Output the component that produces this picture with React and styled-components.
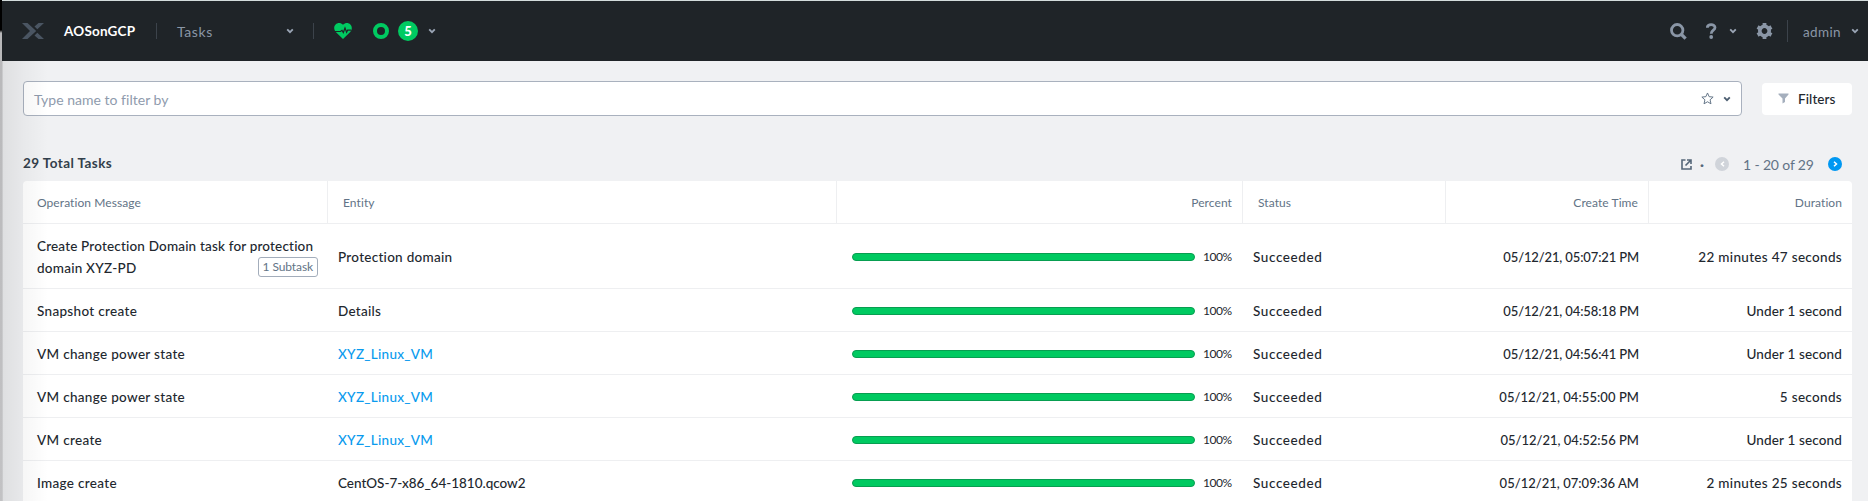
import React from 'react';
import styled, { createGlobalStyle } from 'styled-components';

const Global = createGlobalStyle`
  * { box-sizing: border-box; }
  body { margin: 0; overflow: hidden; background: #f0f1f3; font-family: Lato, sans-serif; }
`;
const Window = styled.div`
  position: relative; height: 501px; display: flex; overflow: hidden;
`;
const Edge = styled.div`
  flex: 0 0 2px; background: linear-gradient(#000 0 30px, #b8b8ba 33px, #c2c2c4 100%);
`;
const Shade = styled.div`
  position: absolute; left: 2px; top: 61px; bottom: 0; width: 46px; pointer-events: none;
  background: linear-gradient(90deg, rgba(0,0,0,.16) 0 1px, rgba(0,0,0,.075) 1px, rgba(0,0,0,.035) 21px, rgba(0,0,0,0) 100%);
`;
const Main = styled.div`flex: 1; min-width: 0;`;
const Text = styled.span`
  white-space: nowrap; display: block;
  font-size: ${p => p.$size || 14}px;
  font-weight: ${p => p.$weight || 400};
  letter-spacing: ${p => p.$track || 0}px;
  color: ${p => p.$color || '#22272e'};
`;
const TopBar = styled.header`
  height: 61px; border-top: 1px solid #d3dcdc; background: #1f2428;
  display: flex; align-items: center; padding: 0 9px 0 20px;
`;
const Group = styled.div`
  display: flex; align-items: center; margin-left: ${p => p.$ml || 0}px;
  width: ${p => p.$w ? p.$w + 'px' : 'auto'}; padding-top: ${p => p.$pt || 0}px;
`;
const Divider = styled.i`width: 1px; height: ${p => p.$h}px; background: #3c434b; margin-left: ${p => p.$ml}px;`;
const Spacer = styled.div`flex: 1;`;
const Icon = styled.svg`display: block; flex: none; margin-left: ${p => p.$ml || 0}px;`;
const Badge = styled.span`
  width: 20px; height: 20px; border-radius: 50%; background: #00ca61; color: #fff; margin-left: 9px;
  display: grid; place-items: center; font-size: 13px; font-weight: 900; line-height: 20px;
`;
const Chevron = ({ color = '#9aa5b5', ml }) => (
  <Icon $ml={ml} width="8" height="6" viewBox="0 0 8 6"><path d="M1.2 1.3 4 4.2 6.8 1.3" fill="none" stroke={color} strokeWidth="1.8" /></Icon>
);
const Content = styled.main`padding: 20px 16px 0 21px;`;
const FilterRow = styled.div`display: flex; align-items: center; gap: 20px;`;
const Search = styled.div`
  flex: 1; height: 35px; border: 1px solid #a9b1be; border-radius: 4px; background: #fff;
  display: flex; align-items: center; padding: 0 10px 0 10px;
`;
const FilterButton = styled.button`
  width: 90px; height: 32px; border: 0; border-radius: 4px; background: #fff; font-family: inherit;
  display: flex; align-items: center; padding: 0 0 0 16px; margin: 0;
`;
const Summary = styled.div`
  height: 65px; display: flex; align-items: flex-end; padding: 0 10px 7px 0;
`;
const Total = styled.div`padding-bottom: 3px;`;
const Pager = styled.div`display: flex; align-items: center; height: 20px;`;
const PageButton = styled.span`
  width: 14px; height: 14px; border-radius: 50%; background: ${p => p.$on ? '#0098f2' : '#d0d4da'};
  display: grid; place-items: center; margin-left: ${p => p.$ml}px;
`;
const Table = styled.section`background: #fff; border-radius: 4px 4px 0 0;`;
const Row = styled.div`
  display: grid; grid-template-columns: 305px 509px 406px 203px 203px 1fr;
  height: ${p => p.$h}px; border-bottom: 1px solid #eeeff1;
`;
const HeadCell = styled.div`
  display: flex; align-items: center; justify-content: ${p => p.$right ? 'flex-end' : 'flex-start'};
  padding: 0 10px 0 ${p => p.$first ? 14 : 15}px; border-right: ${p => p.$last ? 0 : '1px solid #eeeff1'};
`;
const Cell = styled.div`
  display: flex; align-items: center; justify-content: ${p => p.$right ? 'flex-end' : 'flex-start'};
  padding: 2px 10px 0 ${p => p.$first ? 14 : 10}px;
`;
const Stack = styled.div`flex: 1; min-width: 0;`;
const Line = styled.div`display: flex; justify-content: space-between; height: 22px; align-items: center;`;
const Subtask = styled.span`
  height: 20px; border: 1px solid #a3adbb; border-radius: 3px; padding: 0 4px;
  display: flex; align-items: center; margin: -3px 0 0;
`;
const Bar = styled.div`
  width: 343px; height: 8px; border-radius: 4px; background: #00ca61; border: 1px solid #089e51; margin-right: 8px;
`;
const Percent = styled.div`width: 30px; margin-top: -2px;`;

const tasks = [
  ['Create Protection Domain task for protection', 'Protection domain', '05/12/21, 05:07:21 PM', '22 minutes 47 seconds', -0.13],
  ['Snapshot create', 'Details', '05/12/21, 04:58:18 PM', 'Under 1 second', -0.13],
  ['VM change power state', 'XYZ_Linux_VM', '05/12/21, 04:56:41 PM', 'Under 1 second', -0.13],
  ['VM change power state', 'XYZ_Linux_VM', '05/12/21, 04:55:00 PM', '5 seconds', 0.06],
  ['VM create', 'XYZ_Linux_VM', '05/12/21, 04:52:56 PM', 'Under 1 second', 0.01],
  ['Image create', 'CentOS-7-x86_64-1810.qcow2', '05/12/21, 07:09:36 AM', '2 minutes 25 seconds', 0.02],
];
const heads = ['Operation Message', 'Entity', 'Percent', 'Status', 'Create Time', 'Duration'];
const Body = p => <Text $size={13.5} $track={0.32} $weight={500} {...p} />;

function Header() {
  return (
    <TopBar>
      <Icon width="22" height="16" viewBox="0 0 22 16" fill="#4a5562">
        <path d="M0 0H5.500L14.200 8 5.500 16H0L8 8Z" />
        <path d="M16.500 0H22L15.300 6.200 12.500 3.600ZM15.300 9.800 22 16H16.500L12.500 12.400Z" />
      </Icon>
      <Group $ml={20} $w={72}><Text $color="#fff" $weight={700} $size={13.5} $track={0.2}>AOSonGCP</Text></Group>
      <Divider $ml={20} $h={16} />
      <Group $ml={20} $w={109}><Text $color="#8a96a6" $track={0.6}>Tasks</Text></Group>
      <Chevron />
      <Divider $ml={19} $h={16} />
      <Icon $ml={20} width="18" height="16" viewBox="0 0 18 16">
        <path d="M9 16 2 9.2C-3.2 3.4 4-3.2 9 1.8 14-3.2 21.200 3.400 16 9.200Z" fill="#00ca61" />
        <path d="M1 8.500H6.500L8 7.300 9.300 9.500 11 5 12.600 9.200 13.600 7.200H17" fill="none" stroke="#1f2428" strokeWidth="1.200" />
      </Icon>
      <Icon $ml={21} width="16" height="16" viewBox="0 0 16 16"><circle cx="8" cy="8" r="6" fill="none" stroke="#00ca61" strokeWidth="4" /></Icon>
      <Badge>5</Badge>
      <Chevron ml={10} />
      <Spacer />
      <Icon width="17" height="17" viewBox="0 0 17 17" fill="none" stroke="#8a96a6" strokeWidth="2.800"><circle cx="7.200" cy="7.200" r="5.700" /><path d="m11 11 4.600 4.600" strokeWidth="3.200" /></Icon>
      <Icon $ml={19} width="11" height="16" viewBox="0 0 11 16"><path d="M1.300 4.800C1.300.5 9 .6 9 4.500 9 7.300 5.200 7 5.200 10.800" fill="none" stroke="#8a96a6" strokeWidth="2.800" /><circle cx="5.200" cy="14" r="1.900" fill="#8a96a6" /></Icon>
      <Chevron ml={12} />
      <Icon $ml={19} width="17" height="16" viewBox="0 0 17 16">
        <g transform="translate(8.500 8)" fill="none" stroke="#8a96a6">
          <circle r="4.700" strokeWidth="3.600" />
          {[0, 60, 120, 180, 240, 300].map(a => <path key={a} d="M-1.900-6.400H1.900" strokeWidth="3.200" transform={`rotate(${a})`} />)}
        </g>
      </Icon>
      <Divider $ml={14} $h={22} />
      <Group $ml={15} $w={38} $pt={2}><Text $color="#8a96a6" $size={13.5} $track={0.35}>admin</Text></Group>
      <Chevron ml={10} />
    </TopBar>
  );
}

export default function App() {
  return (
    <Window>
      <Global />
      <Edge />
      <Main>
        <Header />
        <Content>
          <FilterRow>
            <Search>
              <Group $pt={1}><Text $color="#8f9bad" $size={14} $track={0.02}>Type name to filter by</Text></Group>
              <Spacer />
              <Icon width="13" height="13" viewBox="0 0 12 12"><path d="m6 .9 1.500 3.400 3.700.4-2.800 2.500.8 3.700L6 9 2.800 10.900l.8-3.700L.8 4.700l3.700-.4Z" fill="none" stroke="#627386" strokeWidth=".9" /></Icon>
              <Chevron color="#4b5d70" ml={9} />
            </Search>
            <FilterButton>
              <Icon width="11" height="11" viewBox="0 0 11 11"><path d="M.5.500H10.500V1.500L7 5.500V9L4.500 10.500V5.500L.5 1.500Z" fill="#a5afbd" /></Icon>
              <Group $ml={9}><Text $weight={500} $size={13.5} $track={0.1}>Filters</Text></Group>
            </FilterButton>
          </FilterRow>
          <Summary>
            <Total><Text $weight={700} $color="#323f4b" $size={13.5} $track={0.42}>29 Total Tasks</Text></Total>
            <Spacer />
            <Pager>
              <Icon width="11" height="11" viewBox="0 0 11 11" fill="none" stroke="#556779" strokeWidth="1.600"><path d="M4.500 1H1v9h9V7M6 1h4v4M10 1 4.500 6.500" /></Icon>
              <Group $ml={8}><Text $color="#556779" $weight={900}>·</Text></Group>
              <PageButton $ml={11}><Icon width="5" height="6" viewBox="0 0 5 6"><path d="M4 .7 1.500 3 4 5.300" fill="none" stroke="#fff" strokeWidth="1.500" /></Icon></PageButton>
              <Group $ml={14} $w={70}><Text $color="#627386" $size={14} $track={-0.15}>1 - 20 of 29</Text></Group>
              <PageButton $on $ml={15}><Icon width="5" height="6" viewBox="0 0 5 6"><path d="M1 .7 3.500 3 1 5.300" fill="none" stroke="#fff" strokeWidth="1.500" /></Icon></PageButton>
            </Pager>
          </Summary>
          <Table>
            <Row $h={43}>
              {heads.map((h, i) => (
                <HeadCell key={h} $first={i === 0} $last={i === 5} $right={i === 2 || i > 3}>
                  <Text $size={12} $color="#627386" $track={0.08}>{h}</Text>
                </HeadCell>
              ))}
            </Row>
            {tasks.map(([name, entity, time, duration, timeTrack], i) => (
              <Row key={time} $h={i ? 43 : 65}>
                <Cell $first>
                  {i ? <Body>{name}</Body> : (
                    <Stack>
                      <Line><Body $track={0.18}>{name}</Body></Line>
                      <Line><Body $track={0.24}>domain XYZ-PD</Body><Subtask><Text $size={12} $color="#627386" $track={-0.1}>1 Subtask</Text></Subtask></Line>
                    </Stack>
                  )}
                </Cell>
                <Cell><Body $track={i === 5 ? -0.02 : 0.28} $color={entity.startsWith('XYZ') ? '#0a9bee' : undefined}>{entity}</Body></Cell>
                <Cell $right><Bar /><Percent><Text $size={12} $track={-0.45}>100%</Text></Percent></Cell>
                <Cell><Body $track={0.6}>Succeeded</Body></Cell>
                <Cell $right><Body $size={13} $track={timeTrack}>{time}</Body></Cell>
                <Cell $right><Body $track={duration.startsWith('Under') ? 0.15 : 0.32}>{duration}</Body></Cell>
              </Row>
            ))}
          </Table>
        </Content>
      </Main>
      <Shade />
    </Window>
  );
}
